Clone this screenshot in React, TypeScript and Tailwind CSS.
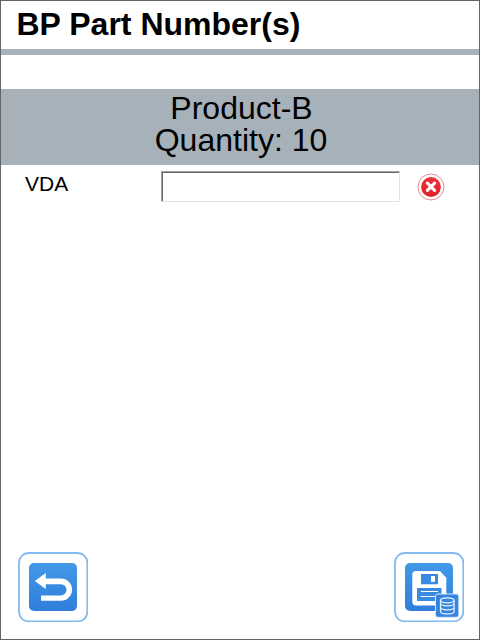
import React from 'react';

function ClearIcon() {
  return (
    <svg width="28" height="28" viewBox="0 0 28 28" className="block">
      <defs>
        <linearGradient id="red" x1="0" y1="0" x2="0" y2="1">
          <stop offset="0" stopColor="#ee3338" />
          <stop offset="1" stopColor="#dc2229" />
        </linearGradient>
      </defs>
      <circle cx="14" cy="14" r="13" fill="#fff" stroke="#e98b8e" strokeWidth="1" />
      <circle cx="14" cy="14" r="9.9" fill="url(#red)" />
      <path d="M10.4 10.2l7.2 7.2M17.6 10.2l-7.2 7.2" stroke="#fff" strokeWidth="3.1" strokeLinecap="round" />
    </svg>
  );
}

function Frame() {
  return (
    <>
      <defs>
        <linearGradient id="blue" x1="0" y1="0" x2="0" y2="1">
          <stop offset="0" stopColor="#4299e8" />
          <stop offset="1" stopColor="#307edb" />
        </linearGradient>
      </defs>
      <rect x="1" y="1" width="68.3" height="68.3" rx="9.5" fill="#fff" stroke="#84bbef" strokeWidth="1.8" />
      <rect x="11" y="11" width="48" height="48" rx="5" fill="url(#blue)" />
    </>
  );
}

function BackButton() {
  return (
    <button type="button" aria-label="Back" className="block">
      <svg width="70" height="70" viewBox="0 0 70 70" className="block">
        <Frame />
        <path d="M16.8 29L27.8 21v5.4h15.1a11.2 11.2 0 0 1 0 22.4H23v-5.4h19.9a5.6 5.6 0 0 0 0-11.2H27.8v4.9z" fill="#fff" />
      </svg>
    </button>
  );
}

function SaveButton() {
  return (
    <button type="button" aria-label="Save" className="block">
      <svg width="70" height="70" viewBox="0 0 70 70" className="block">
        <Frame />
        <path d="M22 19h24l6.3 6.8V50.5a3 3 0 0 1-3 3H22a3.7 3.7 0 0 1-3.7-3.7V22.7A3.7 3.7 0 0 1 22 19z" fill="#fff" />
        <path d="M27 22h17v10.3H27zM23 36h24.5v13H23z" fill="#398be1" />
        <path d="M37 24h4v5.8h-4z" fill="#fff" />
        <path d="M26.7 39.5h17.3M26.7 44.5h17.3" stroke="#fff" strokeWidth="1" />
        <rect x="41.5" y="42" width="23.3" height="23.3" rx="2.5" fill="#3585de" stroke="#d4e7fb" strokeWidth="1" />
        <g fill="none" stroke="#e4f1fd" strokeWidth="1.25">
          <ellipse cx="53.3" cy="48.3" rx="6.8" ry="2.5" />
          <path d="M46.5 48.3v3c0 3.3 13.6 3.3 13.6 0v-3M46.5 52.3v3c0 3.3 13.6 3.3 13.6 0v-3M46.5 56.3v3.1c0 3.3 13.6 3.3 13.6 0v-3.1" />
        </g>
      </svg>
    </button>
  );
}

export default function App() {
  return (
    <main className="flex h-[640px] w-[480px] flex-col border border-[#656565] bg-white font-['Liberation_Sans',Arial,sans-serif] text-black">
      <h1 className="h-12 pl-[15.5px] pt-[5px] text-[32px] font-bold leading-9">BP Part Number(s)</h1>
      <div className="h-1.5 bg-[#a7b1b9]" />
      <section className="mt-[34px] h-[76px] bg-[#a7b1b9] pt-[3px] text-center text-[32px] leading-8">
        <div className="pl-[3px]">Product-B</div>
        <div className="pl-[2px]">Quantity: 10</div>
      </section>
      <div className="flex items-start">
        <label htmlFor="vda" className="w-[160px] pl-6 pt-[7px] text-[21px] leading-6">VDA</label>
        <div className="mt-1.5 h-[31px] w-[239px] border border-b-[#e3e3e3] border-l-[#a0a0a0] border-r-[#e3e3e3] border-t-[#a0a0a0]">
          <input id="vda" className="block h-full w-full border-l border-t border-[#696969] bg-white px-1 text-[21px] outline-none" />
        </div>
        <button type="button" aria-label="Clear" className="ml-[17px] mt-2">
          <ClearIcon />
        </button>
      </div>
      <footer className="mb-[17px] mt-auto flex justify-between pl-[17px] pr-[15px]">
        <BackButton />
        <SaveButton />
      </footer>
    </main>
  );
}
